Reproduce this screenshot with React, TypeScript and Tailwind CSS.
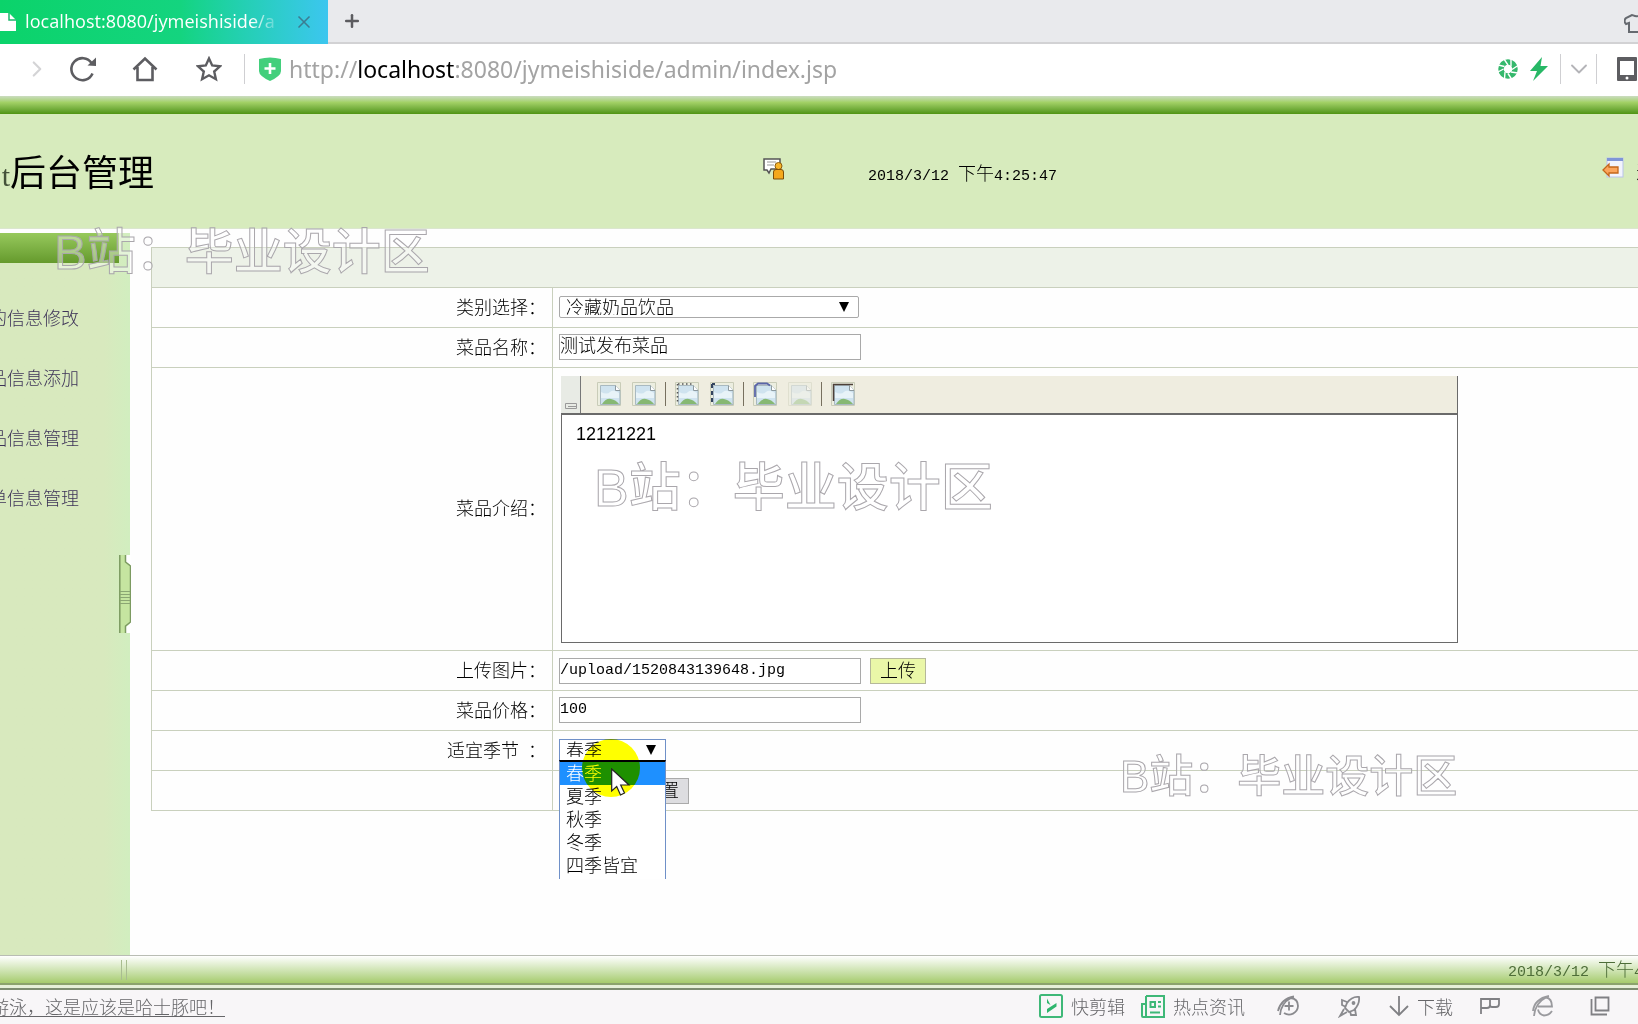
import type { ReactNode } from 'react'
import { ChevronDown, ChevronRight, Plus, X } from 'lucide-react'

const menu = ['的信息修改', '品信息添加', '品信息管理', '单信息管理']
const seasons = ['春季', '夏季', '秋季', '冬季', '四季皆宜']

const field = 'block h-[26px] w-[302px] border border-[#a9a9a9] bg-white text-black outline-none'

function DateTime({ date, half, time }: { date: string; half: string; time: string }) {
  return (
    <span className="flex items-baseline whitespace-pre">
      <span className="font-['Liberation_Mono',monospace] text-[15px]">{date} </span>
      {half}
      <span className="font-['Liberation_Mono',monospace] text-[15px]">{time}</span>
    </span>
  )
}

function Watermark({ className }: { className: string }) {
  return (
    <div
      aria-hidden="true"
      className={`pointer-events-none absolute z-20 whitespace-nowrap font-['Liberation_Sans','Noto_Sans_CJK_SC',sans-serif] leading-none font-medium text-white/40 [-webkit-text-stroke:1px_#aaa7ac] ${className}`}
    >
      B站：毕业设计区
    </div>
  )
}

function BrowserTabs() {
  return (
    <div className="flex h-11 items-stretch border-b-2 border-[#d2d2d4] bg-[#e9eaed]">
      <div className="-mb-0.5 flex w-[328px] items-center bg-linear-to-r from-[#0bd36a] via-[#14d47f] via-55% to-[#3cc6ef] pr-[14px]">
        <svg className="h-[18px] w-4" viewBox="0 0 16 18" fill="none">
          <path d="M0 0h9l7 7v11H0z" fill="#fff" />
          <path d="M9 0v7h7" stroke="#1bb86c" strokeWidth="1.5" />
        </svg>
        <div className="ml-[9px] flex-1 overflow-hidden whitespace-nowrap bg-linear-to-r from-white from-88% to-transparent bg-clip-text pb-0.5 font-['Noto_Sans',sans-serif] text-lg leading-7 font-normal text-transparent">
          localhost:8080/jymeishiside/a
        </div>
        <button aria-label="关闭" className="ml-3 text-[#3b7d92]">
          <X size={20} strokeWidth={2} />
        </button>
      </div>
      <button aria-label="新标签" className="ml-3 text-[#5c5c60]">
        <Plus size={24} strokeWidth={3} className="h-6 w-6 p-0.5" />
      </button>
      <svg className="ml-auto h-10 w-[14px]" viewBox="0 0 14 40" fill="none" stroke="#666a70" strokeWidth="2">
        <path d="M14 16c-3 1-5-1-6-1l-6 3c-2 2-2 4 0 6l3-1v9h9" />
      </svg>
    </div>
  )
}

function AddressBar() {
  return (
    <div className="flex h-[52px] items-center bg-white pb-0.5 text-[#5d5d61]">
      <button aria-label="前进" className="ml-[24px] text-[#d4d4d6]">
        <ChevronRight size={26} strokeWidth={2} />
      </button>
      <button aria-label="刷新" className="ml-[19px]">
        <svg className="h-7 w-7" viewBox="0 0 28 28" fill="none">
          <path d="M23.5 18.5A11 11 0 1 1 22.5 8" stroke="currentColor" strokeWidth="2.6" />
          <path d="M18.5 10.5l8.5.5V2.5z" fill="currentColor" />
        </svg>
      </button>
      <button aria-label="主页" className="ml-[35px]">
        <svg className="h-[26px] w-[26px]" viewBox="0 0 26 26" fill="none" stroke="currentColor" strokeWidth="2.6">
          <path d="M1.5 13.5L13 2.5l11.500 11M5.500 11v13h15V11" />
        </svg>
      </button>
      <button aria-label="收藏" className="ml-[38px]">
        <svg className="h-[26px] w-[26px]" viewBox="0 0 26 26" fill="none" stroke="currentColor" strokeWidth="2.4">
          <path d="M13 2.500l3.200 7 7.800 .8-5.800 5.200 1.700 7.700L13 19.300l-6.900 3.900 1.700-7.700L2 10.300l7.800-.8z" />
        </svg>
      </button>
      <span className="ml-[22px] h-[30px] w-px bg-[#cfcfd2]" />
      <svg className="ml-[14px] h-6 w-[22px]" viewBox="0 0 22 24">
        <path d="M0 2q11-3 22 0v12q0 5-11 10Q0 19 0 14z" fill="#43cf7c" />
        <path d="M11 6v11M5.500 11.500h11" stroke="#fff" strokeWidth="2.600" />
      </svg>
      <div className="ml-2 font-['Noto_Sans',sans-serif] text-[23px] leading-8 font-normal text-[#a3a3a3]">
        http://<span className="text-black">localhost</span>:8080/jymeishiside/admin/index.jsp
      </div>
      <div className="ml-auto flex items-center">
        <svg className="h-5 w-5" viewBox="0 0 20 20" fill="none">
          <circle cx="10" cy="10" r="7" stroke="#35b86c" strokeWidth="5.500" />
          <path
            d="M10 6L6 0M13 7.500L13 0M14 10.500L20 6.500M13 13L20 14M10 14.500L13.500 20M7 13L6.500 20M5.500 10L0 13M6.500 7.500L0 6"
            stroke="#fff"
            strokeWidth="1.400"
          />
        </svg>
        <svg className="ml-3 h-6 w-[18px]" viewBox="0 0 18 24" fill="#27b866">
          <path d="M12 0L0 14h7L3 24 18 9h-7.500z" />
        </svg>
        <span className="ml-3 h-[30px] w-px bg-[#cfcfd2]" />
        <button aria-label="展开" className="ml-1 text-[#b4b4b8]">
          <ChevronDown size={28} strokeWidth={1.6} />
        </button>
        <span className="ml-[3px] h-[30px] w-px bg-[#cfcfd2]" />
        <svg className="mr-px ml-5 h-6 w-5" viewBox="0 0 20 24" fill="none">
          <path d="M0 1q0-1 1-1h18q1 0 1 1v22q0 1-1 1H1q-1 0-1-1zM3 4v14h14V4z" fill="#5d5d61" fillRule="evenodd" />
          <circle cx="10" cy="21" r="1.500" fill="#fff" />
        </svg>
      </div>
    </div>
  )
}

function PageHeader() {
  return (
    <header>
      <div className="h-[18px] bg-linear-to-b from-[#cbdcc0] via-[#a3d166] via-35% to-[#4f9410]" />
      <div className="flex h-[115px] items-center border-b border-[#dbe6cf] bg-[#d7ebbd]">
        <h1 className="flex w-[154px] items-baseline justify-end overflow-hidden whitespace-nowrap pt-0.5 text-4xl font-normal">
          <span className="font-['Liberation_Serif',serif] text-3xl text-[#44523a]">t</span>
          后台管理
        </h1>
        <svg className="mb-1 ml-[609px] h-[22px] w-[22px]" viewBox="0 0 22 22">
          <path d="M1 1h16v10h-9l-2 4-2-3H1z" fill="#fff" stroke="#555" strokeWidth="1.500" />
          <path d="M4 4h9M4 7h7" stroke="#999" />
          <circle cx="15.500" cy="8" r="3.500" fill="#f8b52a" stroke="#8c5a0c" />
          <path d="M10.500 21v-7q0-2.500 2.500-2.500h5q2.500 0 2.500 2.500v7z" fill="#f5a81c" stroke="#7d4e08" />
        </svg>
        <div className="ml-[83px] pt-1 text-lg">
          <DateTime date="2018/3/12" half="下午" time="4:25:47" />
        </div>
        <a href="#logout" className="ml-auto flex w-9 items-center overflow-hidden whitespace-nowrap text-lg">
          <svg className="mb-1.5 h-[22px] w-[22px] shrink-0" viewBox="0 0 22 22">
            <rect x="5" y="1" width="16" height="19" fill="#f2f4fd" stroke="#b9c4ea" />
            <path d="M5 1h16v3H5z" fill="#7f95d8" />
            <path d="M1 13l6-6v3h9v6H7v3z" fill="#fba55c" stroke="#c4661a" strokeWidth="1.300" />
          </svg>
          <span className="ml-3">退出</span>
        </a>
      </div>
    </header>
  )
}

function Sidebar() {
  return (
    <aside className="mt-1 flex w-[130px] shrink-0 bg-linear-to-r from-[#d8e9be] from-80% to-[#d1eebf]">
      <div className="w-[119px] overflow-hidden">
        <div className="h-[30px] bg-linear-to-b from-[#97c95c] to-[#659a2c]" />
        <nav className="pt-6">
          {menu.map((item) => (
            <a
              key={item}
              href="#"
              className="flex h-[60px] items-center justify-end whitespace-nowrap pr-10 text-lg text-[#3d3358]"
            >
              {item}
            </a>
          ))}
        </nav>
      </div>
      <button aria-label="收起" className="-mr-px flex w-3 items-center">
        <svg className="h-[78px] w-3" viewBox="0 0 12 78" fill="none">
          <path d="M.5 0h6v7l5 4v56l-5 4v7h-6z" fill="#c5e5a0" />
          <path d="M7 0h5v10L7 7zM7 78h5V68l-5 4z" fill="#fff" />
          <path d="M.8 0v78M6.500 0v7l5 4v56l-5 4v7" stroke="#7c9a61" strokeWidth="1.500" />
          <path d="M1 36.500h10M1 39.500h10M1 42.500h10M1 45.500h10M1 48.500h10" stroke="#8ba673" />
        </svg>
      </button>
    </aside>
  )
}

function PageIcon({ mark, faded }: { mark?: string; faded?: boolean }) {
  return (
    <svg className={`h-6 w-6 ${faded ? 'opacity-40' : ''}`} viewBox="0 0 24 24" fill="none">
      <path d="M.5.5h23v23H.5z" fill="#eceee0" stroke="#c9ccb8" />
      <path d="M3.500 3.500h15l4.500 5v14H3.500z" fill="#cfe3ef" stroke="#a9b9c0" />
      <path d="M4 10q6 3 9 0t9 1v5H4z" fill="#e8f3f8" />
      <path d="M5 22q4-6 9-5t8 5z" fill="#86b873" />
      <path d="M18.500 3.500v5H23" fill="#fff" stroke="#8d999e" />
      {mark === 'dots' && <path d="M2.500 2v20M3 2h15" stroke="#555" strokeWidth="1.500" strokeDasharray="1.500 2.500" />}
      {mark === 'dash' && <path d="M2 2v20M2 2h3" stroke="#33445e" strokeWidth="2" strokeDasharray="4 3" />}
      {mark === 'blue' && <path d="M2 15V4l3-2.500h9l3 2" stroke="#5a65a8" strokeWidth="1.800" />}
      {mark === 'dark' && <path d="M2.500 19V2.500H22" stroke="#4d4038" strokeWidth="1.500" />}
    </svg>
  )
}

function Separator() {
  return <span className="-mx-0.5 h-6 w-px bg-[#77705f]" />
}

function Editor() {
  return (
    <div className="ml-0.5 w-[897px] border-r border-[#6a6a6a]">
      <div className="flex h-[37px] items-stretch bg-[#efede0]">
        <div className="flex w-5 items-end border-r border-[#777] bg-[#e8ebe5] pb-1 pl-1">
          <svg className="h-1.5 w-3" viewBox="0 0 12 6" fill="none" stroke="#999">
            <path d="M.5.500h11v5H.5zM3 3.500h8" />
          </svg>
        </div>
        <div className="flex items-center gap-[11px] pl-4">
          <button type="button" aria-label="剪切"><PageIcon /></button>
          <button type="button" aria-label="复制"><PageIcon /></button>
          <Separator />
          <button type="button" aria-label="编号"><PageIcon mark="dots" /></button>
          <button type="button" aria-label="列表"><PageIcon mark="dash" /></button>
          <Separator />
          <button type="button" aria-label="链接"><PageIcon mark="blue" /></button>
          <button type="button" aria-label="取消链接"><PageIcon faded /></button>
          <Separator />
          <button type="button" aria-label="图片"><PageIcon mark="dark" /></button>
        </div>
      </div>
      <textarea
        id="intro"
        defaultValue="12121221"
        className="block h-[230px] w-full resize-none border-t-2 border-b border-l border-[#6a6a6a] bg-white px-[14px] py-[7px] font-['Liberation_Sans',sans-serif] text-lg leading-6 font-normal text-black outline-none"
      />
    </div>
  )
}

function Row({ label, id, children }: { label?: string; id?: string; children: ReactNode }) {
  return (
    <tr className="h-10">
      <th className="border border-[#c9d0bd] pr-1.5 pb-1 text-right font-light">
        {label && (
          <label htmlFor={id} className="whitespace-pre">
            {label}
          </label>
        )}
      </th>
      <td className="border border-r-0 border-[#c9d0bd] pl-1.5">{children}</td>
    </tr>
  )
}

function SeasonPicker() {
  return (
    <div className="relative w-[107px]">
      <select
        id="season"
        defaultValue="春季"
        className="block h-[23px] w-full appearance-none border border-[#6f90c8] bg-white pb-1 pl-1.5 leading-4 text-black outline-none"
      >
        {seasons.map((s) => (
          <option key={s}>{s}</option>
        ))}
      </select>
      <Triangle />
      <ul className="absolute top-[21px] z-10 h-[119px] w-full border-x border-t-2 border-x-[#6f90c8] border-t-black bg-white">
        {seasons.map((s, i) => (
          <li
            key={s}
            className={`h-[23px] pl-1.5 leading-5 ${i === 0 ? 'bg-[#1e90ff] text-white' : 'text-black'}`}
          >
            {s}
          </li>
        ))}
      </ul>
      <span className="absolute top-0 left-[23px] z-10 h-[58px] w-[58px] rounded-full bg-[#ffff00] mix-blend-multiply" />
      <svg className="absolute top-[29px] left-[52px] z-10 h-7 w-5" viewBox="0 0 20 28">
        <path d="M.7 1v22l5-4.500L9.500 27l4-2-3.800-8H18z" fill="#fff" stroke="#222" strokeWidth="1.200" />
      </svg>
    </div>
  )
}

function Triangle() {
  return (
    <svg className="pointer-events-none absolute top-1.5 right-[10px] h-2.5 w-[10px]" viewBox="0 0 10 10">
      <path d="M0 0h10L5 10z" />
    </svg>
  )
}

function DishForm() {
  return (
    <form className="mt-[18px] ml-[21px] flex-1">
      <table className="w-full border-collapse text-lg">
        <thead>
          <tr className="h-10">
            <td colSpan={2} className="border border-r-0 border-[#c9d0bd] bg-[#edf2e8]" />
          </tr>
        </thead>
        <tbody className="[&_th]:w-[401px]">
          <Row label="类别选择：" id="category">
            <div className="relative mb-0.5 w-[300px]">
              <select
                id="category"
                className="block h-[22px] w-full appearance-none rounded-xs border border-[#a9a9a9] bg-white pb-0.5 pl-1.5 leading-[18px] text-black outline-none"
              >
                <option>冷藏奶品饮品</option>
              </select>
              <Triangle />
            </div>
          </Row>
          <Row label="菜品名称：" id="name">
            <input id="name" defaultValue="测试发布菜品" className={`${field} mb-0.5 pb-[5px]`} />
          </Row>
          <tr className="h-[283px]">
            <th className="border border-[#c9d0bd] pr-1.5 pb-1 text-right font-light">
              <label htmlFor="intro">菜品介绍：</label>
            </th>
            <td className="border border-r-0 border-[#c9d0bd] pl-1.5">
              <Editor />
            </td>
          </tr>
          <Row label="上传图片：" id="image">
            <div className="flex gap-[9px]">
              <input
                id="image"
                defaultValue="/upload/1520843139648.jpg"
                className={`${field} font-['Liberation_Mono',monospace] text-[15px] font-normal`}
              />
              <button type="button" className="h-[26px] w-14 border border-[#b5b89a] bg-[#eaf7a8] pb-1 leading-5">
                上传
              </button>
            </div>
          </Row>
          <Row label="菜品价格：" id="price">
            <input
              id="price"
              defaultValue="100"
              className={`${field} mb-0.5 font-['Liberation_Mono',monospace] text-[15px] font-normal`}
            />
          </Row>
          <Row label={'适宜季节\u2002：'} id="season">
            <SeasonPicker />
          </Row>
          <Row>
            <div className="flex gap-[18px]">
              <button type="button" className="h-[26px] w-14 border border-[#aaa] bg-[#dddde0] pb-1 leading-5">
                提交
              </button>
              <button type="reset" className="h-[26px] w-14 border border-[#aaa] bg-[#dddde0] pb-1 leading-5">
                重置
              </button>
            </div>
          </Row>
        </tbody>
      </table>
    </form>
  )
}

function PageFooter() {
  return (
    <footer>
      <div className="flex h-[30px] items-center border-t border-b-2 border-t-[#b9bdb4] border-b-[#8ba36c] bg-linear-to-b from-white to-[#a6cb6c]">
        <span className="ml-[121px] h-5 w-1.5 border-x border-[#a9bd90]" />
        <div className="ml-auto w-[130px] overflow-hidden text-lg text-[#4d6d38]">
          <DateTime date="2018/3/12" half="下午" time="4:25:47" />
        </div>
      </div>
      <div className="h-[5px] border-b-2 border-[#7d8c70] bg-[#e6f0d8]" />
    </footer>
  )
}

function StatusBar() {
  return (
    <div className="flex h-[34px] items-center overflow-hidden bg-[#f8f6f8] pr-7 pb-0.5 text-lg text-[#666669]">
      <a href="#news" className="-ml-[9px] whitespace-nowrap underline underline-offset-2">
        游泳，这是应该是哈士豚吧！
      </a>
      <div className="ml-auto flex items-center whitespace-nowrap">
        <button className="flex items-center gap-2">
          <svg className="h-6 w-6" viewBox="0 0 24 24" fill="none">
            <rect x="1" y="1" width="22" height="22" rx="1.500" stroke="#3fb878" strokeWidth="2" />
            <path d="M8 4.500v4.500l3.500 2zM17.500 9v3.500L8 19v-4z" fill="#2fb56e" />
          </svg>
          快剪辑
        </button>
        <button className="ml-4 flex items-center gap-2">
          <svg className="h-6 w-6" viewBox="0 0 24 24" fill="none" stroke="#3fb878" strokeWidth="2">
            <path d="M5 2h18v21H2q-1 0-1-1V10h3M5 2v20M9 18.500h10" />
            <path d="M9.500 8h4.500v5H9.500zM17 8h3M17 12.500h3" />
          </svg>
          热点资讯
        </button>
        <svg className="ml-[31px] h-6 w-6" viewBox="0 0 24 24" fill="none" stroke="#8a8a8e" strokeWidth="1.800">
          <path d="M15 4q7 1 7 8a9 9 0 0 1-14 7M2 17C4 9 9 4 18 2.500M4 21Q5 9 15 4M13 7.500v9M8.500 12h9" />
        </svg>
        <svg className="ml-[38px] h-6 w-6" viewBox="0 0 24 24" fill="none" stroke="#8a8a8e" strokeWidth="1.800">
          <path d="M21 3q-7-1-12 6l-2 5 4 4 5-2q6-6 5-13zM9 8L4 6v5l4 2M17 15l1 6h-5l-1-4M6 15l-4 7 7-4" />
          <circle cx="15.500" cy="9" r="1" />
        </svg>
        <button className="ml-[27px] flex items-center gap-2">
          <svg className="h-[22px] w-5" viewBox="0 0 20 22" fill="none" stroke="#808084" strokeWidth="1.800">
            <path d="M10 1v19M1 11l9 9 9-9" />
          </svg>
          下载
        </button>
        <svg className="ml-[26px] h-[22px] w-[22px]" viewBox="0 0 22 22" fill="none" stroke="#808084" strokeWidth="1.800">
          <path d="M2 19V4h18v5q0 3-3 3h-4q-2 0-2-2V4M2 13h6q3 0 3-3" />
        </svg>
        <svg className="ml-[29px] h-6 w-6" viewBox="0 0 24 24" fill="none" stroke="#9a9a9e" strokeWidth="1.800">
          <path d="M8 12.500h14q0-8-6-9M22 17q-3 4.500-8 4.500-5-1-6-6M3 17C4 9 9 4 19 2M4 22Q5 9 16 3.500" />
        </svg>
        <svg className="ml-9 h-[22px] w-5" viewBox="0 0 20 22" fill="none" stroke="#808084" strokeWidth="1.800">
          <path d="M5.500 2.500h13v13h-13zM1.500 4v15.500H17" />
        </svg>
      </div>
    </div>
  )
}

export default function App() {
  return (
    <div className="relative flex min-h-screen flex-col overflow-hidden bg-[#fefefe] font-['Noto_Sans_CJK_SC',sans-serif] font-light text-black">
      <BrowserTabs />
      <AddressBar />
      <PageHeader />
      <main className="flex flex-1">
        <Sidebar />
        <DishForm />
      </main>
      <PageFooter />
      <StatusBar />
      <Watermark className="top-[228px] left-[54px] text-[49px]" />
      <Watermark className="top-[462px] left-[594px] text-[52px]" />
      <Watermark className="top-[755px] left-[1120px] text-[44px]" />
    </div>
  )
}
